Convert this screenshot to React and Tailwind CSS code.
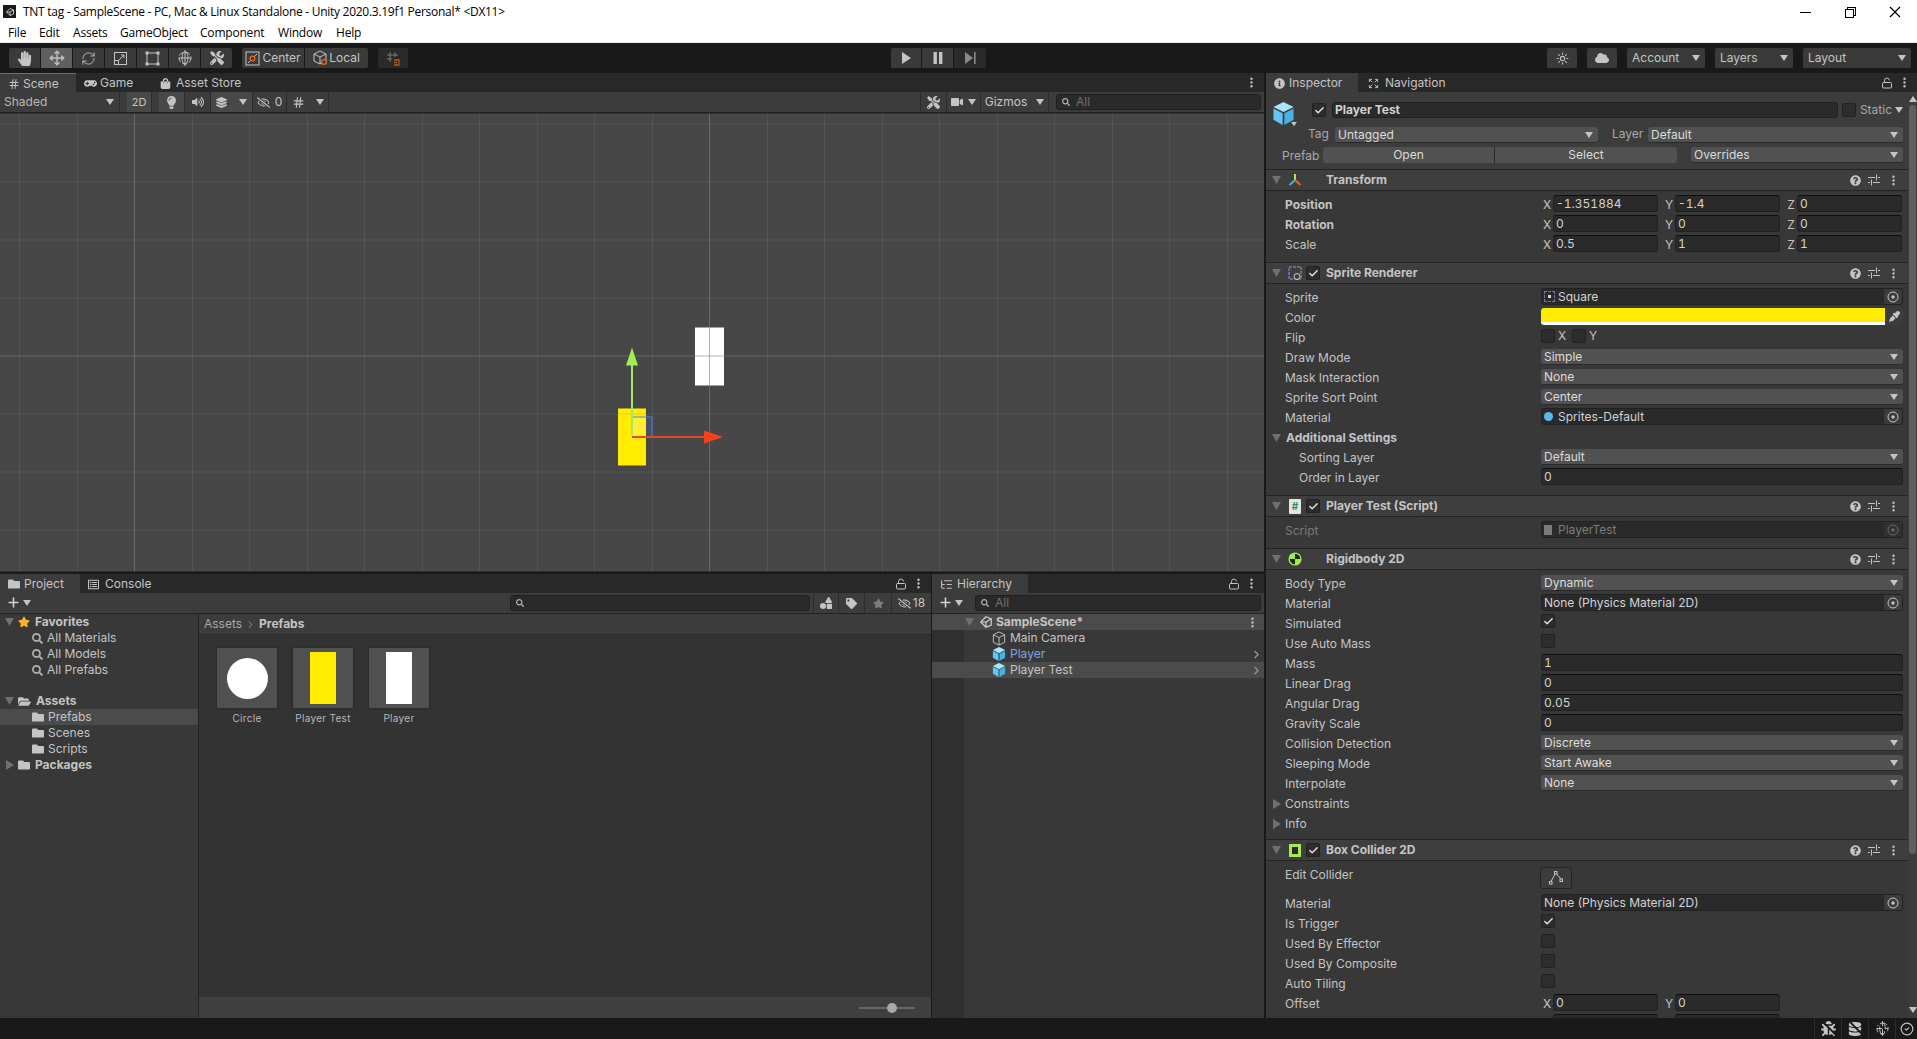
import { Check, ChevronRight, CircleCheck, EllipsisVertical, Expand, Hash, ListTree, LockOpen, Move, Plus, RefreshCw, Sun } from "lucide-react";
import { FaBug, FaCloud, FaDatabase, FaEyeDropper, FaFolder, FaFolderOpen, FaGamepad, FaHandPaper, FaInfoCircle, FaLayerGroup, FaLightbulb, FaQuestionCircle, FaRegEyeSlash, FaRegListAlt, FaSearch, FaShapes, FaShoppingBag, FaStar, FaTag, FaTools, FaVideo, FaVolumeUp } from "react-icons/fa";
import { VscChromeClose, VscChromeMinimize, VscChromeRestore } from "react-icons/vsc";

const menus = [
  ["File", "w-[31px]"],
  ["Edit", "w-[34px]"],
  ["Assets", "w-[47px]"],
  ["GameObject", "w-[80px]"],
  ["Component", "w-[78px]"],
  ["Window", "w-[58px]"],
  ["Help", "w-[30px]"],
];

function Caret({ className = "" }) {
  return (
    <svg width="8" height="6" viewBox="0 0 8 6" className={`shrink-0 ${className}`}>
      <polygon points="0,0 8,0 4,6" fill="#c4c4c4" />
    </svg>
  );
}

function Fold({ open = true }) {
  return (
    <svg width="9" height="10" viewBox="0 0 9 10" className="shrink-0">
      <polygon points={open ? "0,1 9,1 4.5,9" : "1,0 9,5 1,10"} fill="#707070" />
    </svg>
  );
}

function Cube({ size = 14 }) {
  return (
    <svg width={size} height={size} viewBox="0 0 14 16" className="shrink-0">
      <polygon points="7,0 14,3.5 7,7 0,3.5" fill="#a8e4fb" />
      <polygon points="0,4.5 6.4,7.8 6.4,16 0,12.4" fill="#63c5f1" />
      <polygon points="14,4.5 7.6,7.8 7.6,16 14,12.4" fill="#48b2e6" />
    </svg>
  );
}

function WireCube() {
  return (
    <svg width="14" height="15" viewBox="0 0 14 16" className="shrink-0" fill="none" stroke="#c4c4c4" strokeWidth="1">
      <path d="M7 1 13 4V12L7 15 1 12V4ZM1 4 7 7 13 4M7 7V15" />
    </svg>
  );
}

function UnityLogo({ size = 12, color = "#d2d2d2" }) {
  return (
    <svg width={size} height={size} viewBox="0 0 16 16" className="shrink-0" fill="none" stroke={color} strokeWidth="1.6">
      <path d="M8 1 15 4V12L8 15 1 8Z" />
      <path d="M1 8H8L15 4M8 8 8 15" />
    </svg>
  );
}

function ScaleIcon() {
  return (
    <svg width="15" height="15" viewBox="0 0 15 15" fill="none" stroke="#c4c4c4" strokeWidth="1">
      <rect x="1.5" y="1.5" width="12" height="12" />
      <rect x="1.5" y="9.5" width="4" height="4" />
      <path d="M6 9 11 4M8 4H11V7" />
    </svg>
  );
}

function RectIcon() {
  return (
    <svg width="15" height="15" viewBox="0 0 15 15" fill="#c4c4c4" stroke="none">
      <path d="M2 2h11v11H2z" fill="none" stroke="#c4c4c4" />
      <rect x="0.5" y="0.5" width="3" height="3" />
      <rect x="11.5" y="0.5" width="3" height="3" />
      <rect x="0.5" y="11.5" width="3" height="3" />
      <rect x="11.5" y="11.5" width="3" height="3" />
    </svg>
  );
}

function GlobeIcon({ size = 16 }) {
  return (
    <svg width={size} height={size} viewBox="0 0 16 16" fill="none" stroke="#c4c4c4" strokeWidth="1">
      <circle cx="8" cy="8" r="6" strokeDasharray="5 2" />
      <ellipse cx="8" cy="8" rx="3" ry="6" />
      <path d="M2 8H14M8 0V16" />
    </svg>
  );
}

function CenterIcon() {
  return (
    <svg width="15" height="15" viewBox="0 0 15 15" fill="none" className="shrink-0">
      <rect x="1" y="1" width="13" height="13" stroke="#c4c4c4" />
      <path d="M3 12 12 3" stroke="#c4c4c4" />
      <circle cx="7.5" cy="7.5" r="2.4" stroke="#e8662b" strokeWidth="1.3" fill="#3b3b3b" />
    </svg>
  );
}

function LocalIcon() {
  return (
    <svg width="16" height="16" viewBox="0 0 16 16" fill="none" className="shrink-0">
      <path d="M7 1 13 4V11L7 14 1 11V4ZM1 4 7 7 13 4M7 7V14" stroke="#c4c4c4" />
      <circle cx="11" cy="12" r="2.4" stroke="#e8662b" strokeWidth="1.3" fill="#3b3b3b" />
    </svg>
  );
}

function SnapIcon() {
  return (
    <svg width="15" height="15" viewBox="0 0 15 15" fill="none">
      <path d="M4 1V11M9 1V6M1 4H12M1 8H6" stroke="#7d7d7d" />
      <path d="M8 9H13V14H8M8 11.5H11" stroke="#b3542a" strokeWidth="1.3" />
    </svg>
  );
}

function Target() {
  return (
    <svg width="12" height="12" viewBox="0 0 12 12" fill="none">
      <circle cx="6" cy="6" r="5" stroke="#c4c4c4" />
      <circle cx="6" cy="6" r="1.7" fill="#c4c4c4" />
    </svg>
  );
}

function PresetIcon() {
  return (
    <svg width="12" height="12" viewBox="0 0 12 12" fill="none" stroke="#c4c4c4">
      <path d="M0 3.5H7M10 3.5H12M8.5 0.5V6.5M0 8.5H2M5 8.5H12M3.5 5.5V11.5" />
    </svg>
  );
}

function TabBar({ tabs, right }) {
  return (
    <div className="flex h-[19px] shrink-0 items-stretch bg-[#282828]">
      {tabs}
      <div className="ml-auto flex items-center gap-[5px] pr-[6px] text-[#c4c4c4]">
        {right}
      </div>
    </div>
  );
}

function Dots() {
  return <EllipsisVertical size={13} strokeWidth={2.5} className="text-[#c4c4c4]" />;
}

function Tab({ active, blue, width, gap = "gap-[5px]", icon, label }) {
  return (
    <div className={`flex items-center pl-[8px] pt-px ${gap} ${width} ${active ? "bg-[#3c3c3c]" : ""} ${blue ? "border-t border-[#3a79bb]" : ""}`}>
      {icon}
      <span className="text-[#c4c4c4]">{label}</span>
    </div>
  );
}

function ToolBtn({ active, dark, className = "w-[31px]", children }) {
  return (
    <div className={`flex h-5 items-center justify-center ${className} ${active ? "bg-[#5f5f5f]" : dark ? "bg-[#2a2a2a]" : "bg-[#3a3a3a]"} text-[#c4c4c4]`}>
      {children}
    </div>
  );
}

function MainToolbar() {
  return (
    <div className="flex h-[30px] shrink-0 items-start bg-[#191919] pt-[5px]">
      <div className="flex w-[891px] shrink-0 pl-[9px]">
        <div className="flex gap-px overflow-hidden rounded-[2px]">
          <ToolBtn><FaHandPaper size={15} /></ToolBtn>
          <ToolBtn active><Move size={16} /></ToolBtn>
          <ToolBtn><RefreshCw size={15} strokeWidth={1.4} /></ToolBtn>
          <ToolBtn><ScaleIcon /></ToolBtn>
          <ToolBtn><RectIcon /></ToolBtn>
          <ToolBtn><GlobeIcon /></ToolBtn>
          <ToolBtn><FaTools size={14} /></ToolBtn>
        </div>
        <div className="ml-[10px] flex gap-px overflow-hidden rounded-[2px]">
          <ToolBtn className="w-[62px] gap-[2px]"><CenterIcon /><span>Center</span></ToolBtn>
          <ToolBtn className="w-[63px] gap-0"><LocalIcon /><span>Local</span></ToolBtn>
        </div>
        <div className="ml-[10px] overflow-hidden rounded-[2px]">
          <ToolBtn dark className="w-[30px]"><SnapIcon /></ToolBtn>
        </div>
      </div>
      <div className="flex gap-px overflow-hidden rounded-[2px]">
        <ToolBtn className="w-[30px]">
          <svg width="10" height="12" viewBox="0 0 10 12"><polygon points="1,0 10,6 1,12" fill="#c4c4c4" /></svg>
        </ToolBtn>
        <ToolBtn>
          <svg width="10" height="12" viewBox="0 0 10 12" fill="#c4c4c4"><rect x="0.5" width="3.4" height="12" /><rect x="6" width="3.4" height="12" /></svg>
        </ToolBtn>
        <ToolBtn dark className="w-[32px]">
          <svg width="11" height="12" viewBox="0 0 11 12" fill="#888"><polygon points="0,0 8,6 0,12" /><rect x="9" width="1.6" height="12" /></svg>
        </ToolBtn>
      </div>
      <div className="ml-auto flex items-start gap-[10px] pr-[6px]">
        <ToolBtn className="w-[30px] rounded-[2px]"><Sun size={13} /></ToolBtn>
        <ToolBtn className="w-[30px] rounded-[2px]"><FaCloud size={14} /></ToolBtn>
        <TopDrop width="w-[78px]" label="Account" />
        <TopDrop width="w-[78px]" label="Layers" />
        <TopDrop width="w-[108px]" label="Layout" />
      </div>
    </div>
  );
}

function TopDrop({ width, label }) {
  return (
    <div className={`flex h-5 items-center justify-between rounded-[2px] bg-[#3a3a3a] pl-[5px] pr-[5px] text-[#c4c4c4] ${width}`}>
      <span>{label}</span>
      <Caret />
    </div>
  );
}

function SearchBox({ width, placeholder }) {
  return (
    <div className={`flex h-4 items-center gap-[6px] rounded-[3px] border border-[#202020] bg-[#2a2a2a] pl-[5px] text-[#6f6f6f] ${width}`}>
      <FaSearch size={8} className="text-[#b0b0b0]" />
      {placeholder && <span>{placeholder}</span>}
    </div>
  );
}

function StripBtn({ width, children }) {
  return (
    <div className={`flex h-5 items-center justify-center gap-[3px] border-r border-[#2b2b2b] text-[#c4c4c4] ${width}`}>
      {children}
    </div>
  );
}

function SceneToolbar() {
  return (
    <div className="flex h-[21px] shrink-0 items-start border-b border-[#232323] bg-[#3c3c3c] text-[#b8b8b8]">
      <div className="flex h-5 w-[120px] items-center justify-between border-r border-[#2b2b2b] pl-[4px] pr-[5px]">
        <span>Shaded</span>
        <Caret />
      </div>
      <div className="ml-[7px]"><StripBtn width="w-[25px] bg-[#484848] text-[11px]">2D</StripBtn></div>
      <div className="ml-[7px] flex">
        <StripBtn width="w-[26px] bg-[#484848]"><FaLightbulb size={13} /></StripBtn>
        <StripBtn width="w-[26px]"><FaVolumeUp size={12} /></StripBtn>
        <StripBtn width="w-[42px] bg-[#484848]"><FaLayerGroup size={11} /><Caret className="ml-[9px]" /></StripBtn>
        <StripBtn width="w-[34px]"><FaRegEyeSlash size={13} /><span className="ml-[2px]">0</span></StripBtn>
        <StripBtn width="w-[42px]"><Hash size={13} /><Caret className="ml-[8px]" /></StripBtn>
      </div>
      <div className="ml-auto flex items-start pr-[3px]">
        <StripBtn width="w-[27px] border-l"><FaTools size={13} /></StripBtn>
        <StripBtn width="w-[34px]"><FaVideo size={12} /><Caret className="ml-[2px]" /></StripBtn>
        <StripBtn width="w-[68px]"><span>Gizmos</span><Caret className="ml-[6px]" /></StripBtn>
        <div className="ml-[7px] mt-[2px]"><SearchBox width="w-[205px]" placeholder="All" /></div>
      </div>
    </div>
  );
}

function SceneView() {
  const xs = Array.from({ length: 22 }, (_, i) => Math.round(19 + i * 57.5) + 0.5);
  const ys = [124, 182, 240, 298, 356, 414, 472, 530];
  return (
    <svg className="block min-h-0 flex-1" width="1264" height="458" viewBox="0 114 1264 458">
      <rect x="0" y="114" width="1264" height="458" fill="#474747" />
      <rect x="695" y="328" width="29" height="58" fill="#fff" />
      <rect x="632" y="417" width="20" height="20" fill="#3f62c8" fillOpacity="0.3" />
      <rect x="618" y="409" width="28" height="57" fill="#ffec00" />
      <rect x="632" y="417" width="14" height="20" fill="#fff" fillOpacity="0.2" />
      {xs.map((x, i) => (
        <line key={x} x1={x} x2={x} y1="114" y2="572" stroke="#808080" strokeOpacity={i % 10 === 2 ? 0.6 : 0.22} />
      ))}
      {ys.map((y) => (
        <line key={y} x1="0" x2="1264" y1={y + 0.5} y2={y + 0.5} stroke="#808080" strokeOpacity={y === 356 ? 0.6 : 0.22} />
      ))}
      <rect x="632.5" y="417.5" width="19.5" height="19.5" fill="none" stroke="#5b7fc4" />
      <line x1="632" x2="632" y1="437" y2="364" stroke="#a5e868" strokeWidth="2" />
      <polygon points="632,348 638,366 626,366" fill="#9fee52" />
      <line x1="632" x2="706" y1="437.5" y2="437.5" stroke="#e0492a" strokeWidth="2" />
      <polygon points="723,437.5 704,431 704,444" fill="#fb401c" />
    </svg>
  );
}

function ScenePanel() {
  return (
    <div className="flex h-[499px] shrink-0 flex-col overflow-hidden">
      <TabBar
        tabs={
          <>
            <Tab active blue gap="gap-[3px]" width="w-[76px]" icon={<Hash size={12} className="text-[#c4c4c4]" />} label="Scene" />
            <Tab gap="gap-[3px]" width="w-[76px]" icon={<FaGamepad size={13} className="text-[#c4c4c4]" />} label="Game" />
            <Tab width="w-[96px]" icon={<FaShoppingBag size={11} className="text-[#c4c4c4]" />} label="Asset Store" />
          </>
        }
        right={<Dots />}
      />
      <SceneToolbar />
      <SceneView />
    </div>
  );
}

function TreeRow({ indent, fold, icon, label, bold, active }) {
  return (
    <div className={`flex h-4 items-center ${active ? "bg-[#4b4b4b]" : ""}`}>
      <div className={`flex items-center ${indent}`}>
        {fold !== undefined && <Fold open={fold} />}
      </div>
      {icon}
      <span className={`${bold ? "font-bold ml-[5px]" : "ml-[4px]"} text-[#c4c4c4]`}>{label}</span>
    </div>
  );
}

function Thumb({ label, children }) {
  return (
    <div className="flex w-[76px] flex-col items-center">
      <div className="flex h-[60px] w-[60px] items-center justify-center bg-[#505050] shadow-[0_0_2px_#1f1f1f]">
        {children}
      </div>
      <span className="h-5 text-[10px] leading-5 tracking-[0.3px] text-[#b8b8b8]">{label}</span>
    </div>
  );
}

function PlusDrop() {
  return (
    <div className="flex items-center gap-[2px] text-[#d2d2d2]">
      <Plus size={15} strokeWidth={2.5} />
      <Caret />
    </div>
  );
}

function ProjectPanel() {
  return (
    <div className="flex w-[931px] shrink-0 flex-col">
      <TabBar
        tabs={
          <>
            <Tab active gap="gap-[4px]" width="w-[80px]" icon={<FaFolder size={12} className="text-[#c4c4c4]" />} label="Project" />
            <Tab gap="gap-[6px]" width="w-[90px]" icon={<FaRegListAlt size={11} className="text-[#c4c4c4]" />} label="Console" />
          </>
        }
        right={<><LockOpen size={12} /><Dots /></>}
      />
      <div className="flex h-[21px] shrink-0 items-start border-b border-[#232323] bg-[#3c3c3c]">
        <div className="ml-[6px] mt-[2px]"><PlusDrop /></div>
        <div className="ml-auto flex items-start">
          <div className="mt-[2px]"><SearchBox width="w-[300px]" /></div>
          <div className="ml-[3px] flex border-l border-[#2b2b2b]">
            <StripBtn width="w-[25px]"><FaShapes size={12} /></StripBtn>
            <StripBtn width="w-[26px]"><FaTag size={11} /></StripBtn>
            <StripBtn width="w-[27px]"><FaStar size={11} className="text-[#7d7d7d]" /></StripBtn>
            <div className="flex h-5 w-[39px] items-center justify-center gap-[2px] text-[#c4c4c4]"><FaRegEyeSlash size={13} /><span>18</span></div>
          </div>
        </div>
      </div>
      <div className="flex min-h-0 flex-1">
        <div className="w-[199px] shrink-0 border-r border-[#232323] bg-[#383838]">
          <TreeRow indent="w-[18px] pl-[5px]" fold icon={<FaStar size={12} className="text-[#f9b428]" />} label="Favorites" bold />
          <TreeRow indent="w-[32px]" icon={<FaSearch size={11} className="text-[#b0b0b0]" />} label="All Materials" />
          <TreeRow indent="w-[32px]" icon={<FaSearch size={11} className="text-[#b0b0b0]" />} label="All Models" />
          <TreeRow indent="w-[32px]" icon={<FaSearch size={11} className="text-[#b0b0b0]" />} label="All Prefabs" />
          <div className="h-[15px]" />
          <TreeRow indent="w-[18px] pl-[5px]" fold icon={<FaFolderOpen size={13} className="text-[#c4c4c4]" />} label="Assets" bold />
          <TreeRow active indent="w-[32px]" icon={<FaFolder size={12} className="text-[#c4c4c4]" />} label="Prefabs" />
          <TreeRow indent="w-[32px]" icon={<FaFolder size={12} className="text-[#c4c4c4]" />} label="Scenes" />
          <TreeRow indent="w-[32px]" icon={<FaFolder size={12} className="text-[#c4c4c4]" />} label="Scripts" />
          <TreeRow indent="w-[18px] pl-[5px]" fold={false} icon={<FaFolder size={12} className="text-[#c4c4c4]" />} label="Packages" bold />
        </div>
        <div className="flex min-w-0 flex-1 flex-col bg-[#333333]">
          <div className="flex h-[21px] shrink-0 items-center gap-[3px] border-b border-[#2b2b2b] bg-[#3c3c3c] pl-[5px]">
            <span className="text-[#a8a8a8]">Assets</span>
            <ChevronRight size={11} className="text-[#9a9a9a]" />
            <span className="font-bold text-[#c4c4c4]">Prefabs</span>
          </div>
          <div className="flex flex-1 pl-[10px] pt-[13px]">
            <Thumb label="Circle"><div className="h-[41px] w-[41px] rounded-full bg-white" /></Thumb>
            <Thumb label="Player Test"><div className="h-[52px] w-[26px] bg-[#ffec00]" /></Thumb>
            <Thumb label="Player"><div className="h-[52px] w-[26px] bg-white" /></Thumb>
          </div>
          <div className="flex h-[21px] shrink-0 items-center justify-end bg-[#3f3f3f] pr-[16px]">
            <div className="relative h-[2px] w-[56px] bg-[#666666]">
              <div className="absolute left-[28px] top-[-4px] h-[10px] w-[10px] rounded-full bg-[#a8a8a8]" />
            </div>
          </div>
        </div>
      </div>
    </div>
  );
}

function HierRow({ active, color = "text-[#c4c4c4]", icon, label, chevron }) {
  return (
    <div className={`flex h-4 items-center ${active ? "bg-[#4b4b4b]" : ""}`}>
      <div className={`h-full w-8 ${active ? "" : "bg-[#2f2f2f]"}`} />
      <div className="ml-[28px] flex w-[14px] justify-center">{icon}</div>
      <span className={`ml-[4px] ${color}`}>{label}</span>
      {chevron && <ChevronRight size={13} className="ml-auto mr-[1px] text-[#9a9a9a]" />}
    </div>
  );
}

function HierarchyPanel() {
  return (
    <div className="flex min-w-0 flex-1 flex-col">
      <TabBar
        tabs={<Tab active gap="gap-[4px]" width="w-[96px]" icon={<ListTree size={13} className="text-[#c4c4c4]" />} label="Hierarchy" />}
        right={<><LockOpen size={12} /><Dots /></>}
      />
      <div className="flex h-[21px] shrink-0 items-start border-b border-[#232323] bg-[#3c3c3c]">
        <div className="ml-[6px] mt-[2px]"><PlusDrop /></div>
        <div className="ml-auto mr-[3px] mt-[2px]"><SearchBox width="w-[286px]" placeholder="All" /></div>
      </div>
      <div className="flex min-h-0 flex-1 flex-col bg-[#383838]">
        <div className="flex h-4 shrink-0 items-center bg-[#4b4b4b]">
          <div className="ml-[33px]"><Fold /></div>
          <div className="ml-[6px]"><UnityLogo /></div>
          <span className="ml-[4px] font-bold text-[#c4c4c4]">SampleScene*</span>
          <div className="ml-auto mr-[5px]"><Dots /></div>
        </div>
        <HierRow icon={<WireCube />} label="Main Camera" />
        <HierRow icon={<Cube />} label="Player" color="text-[#7ba4e6]" chevron />
        <HierRow active icon={<Cube />} label="Player Test" chevron />
        <div className="flex flex-1"><div className="w-8 bg-[#2f2f2f]" /></div>
      </div>
    </div>
  );
}

function Row({ label, bold, dim, indent = "pl-[19px]", children }) {
  const w = indent === "pl-[19px]" ? "w-[256px]" : "w-[242px]";
  return (
    <div className={`flex h-5 shrink-0 items-start pr-[5px] ${indent}`}>
      <span className={`h-5 shrink-0 leading-5 ${w} ${bold ? "font-bold" : ""} ${dim ? "text-[#7a7a7a]" : "text-[#c4c4c4]"}`}>{label}</span>
      {children}
    </div>
  );
}

function Drop({ value, className = "flex-1" }) {
  return (
    <div className={`mt-px flex h-[16px] items-center justify-between rounded-[3px] border-b border-[#2a2a2a] bg-[#515151] pl-[3px] pr-[5px] text-[#dcdcdc] ${className}`}>
      <span>{value}</span>
      <Caret />
    </div>
  );
}

function Field({ value, className = "flex-1" }) {
  return (
    <div className={`flex h-[17px] items-center rounded-[3px] border border-[#212121] border-t-[#0f0f0f] bg-[#2a2a2a] pl-[2px] tabular-nums text-[#d2d2d2] ${className}`}>
      {value}
    </div>
  );
}

function Obj({ icon, value, dim }) {
  return (
    <div className={`flex h-[17px] flex-1 items-center overflow-hidden rounded-[3px] border border-[#212121] bg-[#2a2a2a] pl-[2px] ${dim ? "text-[#7a7a7a]" : "text-[#d2d2d2]"}`}>
      {icon && <div className="mr-px flex w-[13px] justify-start">{icon}</div>}
      <span>{value}</span>
      <div className={`ml-auto flex h-full w-[18px] items-center justify-center bg-[#3c3c3c] ${dim ? "opacity-40" : ""}`}><Target /></div>
    </div>
  );
}

function Box({ on, className = "" }) {
  return (
    <div className={`flex h-[14px] w-[14px] shrink-0 items-center justify-center rounded-[2px] border border-[#212121] bg-[#2d2d2d] ${className}`}>
      {on && <Check size={11} strokeWidth={3} className="text-[#e4e4e4]" />}
    </div>
  );
}

function Vec({ items }) {
  return (
    <div className="flex gap-[5px]">
      {items.map(([axis, v]) => (
        <div key={axis} className="flex items-start">
          <span className="h-5 w-[12px] text-center leading-5 text-[#c4c4c4]">{axis}</span>
          <Field value={v} className="w-[105px] flex-none" />
        </div>
      ))}
    </div>
  );
}

function CompHeader({ icon, check, title }) {
  return (
    <div className="flex h-[22px] items-center border-b border-t border-[#232323] bg-[#3e3e3e] pl-[6px] pr-[8px]">
      <Fold />
      <div className="ml-[7px] flex w-[14px] justify-center">{icon}</div>
      <div className="ml-[4px] w-[19px]">{check && <Box on />}</div>
      <span className="ml-[1px] font-bold text-[#c4c4c4]">{title}</span>
      <div className="ml-auto flex items-center gap-[7px] text-[#c4c4c4]">
        <FaQuestionCircle size={11} />
        <PresetIcon />
        <Dots />
      </div>
    </div>
  );
}

function Comp({ icon, check, title, pb, children }) {
  return (
    <div>
      <CompHeader icon={icon} check={check} title={title} />
      <div className={`pt-[4px] ${pb}`}>{children}</div>
    </div>
  );
}

function TransformIcon() {
  return (
    <svg width="14" height="14" viewBox="0 0 14 14" fill="none" strokeWidth="2">
      <path d="M7 7V1" stroke="#a5e868" />
      <path d="M7 7 1.5 12" stroke="#4ca9e6" />
      <path d="M7 7 12.5 12" stroke="#e8622b" />
    </svg>
  );
}

function SpriteIcon() {
  return (
    <svg width="14" height="15" viewBox="0 0 14 15" fill="none">
      <rect x="1" y="1" width="12" height="12" stroke="#a48ae8" strokeDasharray="3 1" />
      <circle cx="9" cy="10.5" r="3" stroke="#d2d2d2" fill="#3e3e3e" />
    </svg>
  );
}

function Slashed({ children }) {
  return (
    <div className="relative flex h-full w-[27px] items-center justify-center border-l border-[#2b2b2b]">
      {children}
      <div className="absolute left-[6px] top-[10px] h-[2px] w-[18px] rotate-45 bg-[#191919]" />
    </div>
  );
}

function Inspector() {
  return (
    <div className="flex min-w-0 flex-1 flex-col bg-[#383838]">
      <TabBar
        tabs={
          <>
            <Tab active gap="gap-[4px]" width="w-[92px]" icon={<FaInfoCircle size={11} className="text-[#c4c4c4]" />} label="Inspector" />
            <div className="ml-[2px] flex">
              <Tab gap="gap-[6px]" width="w-[96px]" icon={<Expand size={11} className="text-[#c4c4c4]" />} label="Navigation" />
            </div>
          </>
        }
        right={<><LockOpen size={12} /><Dots /></>}
      />
      <div className="flex min-h-0 flex-1 overflow-hidden">
        <div className="w-[642px] shrink-0">
          <div className="h-[77px] bg-[#3c3c3c] pt-[10px]">
            <div className="flex h-4 items-center pl-[6px] pr-[5px]">
              <div className="relative mt-[6px] flex w-[24px] shrink-0">
                <Cube size={23} />
                <Caret className="absolute -right-[2px] bottom-[-2px] scale-75" />
              </div>
              <Box on className="ml-[16px]" />
              <div className="ml-[6px] flex h-4 flex-1 items-center rounded-[3px] border border-[#212121] bg-[#2a2a2a] pl-[2px] font-bold text-[#d2d2d2]">Player Test</div>
              <Box className="ml-[4px]" />
              <span className="ml-[4px] text-[#a8a8a8]">Static</span>
              <Caret className="ml-[3px]" />
            </div>
            <div className="mt-[8px] flex h-[17px] items-start pl-[42px] pr-[5px]">
              <span className="w-[27px] leading-[16px] text-[#a8a8a8]">Tag</span>
              <Drop value="Untagged" className="w-[263px] flex-none" />
              <span className="ml-[14px] w-[36px] leading-[16px] text-[#a8a8a8]">Layer</span>
              <Drop value="Default" />
            </div>
            <div className="mt-[4px] flex h-4 items-start pl-[16px] pr-[5px]">
              <span className="w-[41px] leading-[18px] text-[#a8a8a8]">Prefab</span>
              <div className="flex h-4 w-[354px] overflow-hidden rounded-[3px] bg-[#515151] text-[#dcdcdc]">
                <div className="flex w-[172px] items-center justify-center border-r border-[#2a2a2a]">Open</div>
                <div className="flex flex-1 items-center justify-center">Select</div>
              </div>
              <div className="ml-[14px] -mt-px flex-1"><Drop value="Overrides" className="w-full" /></div>
            </div>
          </div>

          <Comp icon={<TransformIcon />} title="Transform" pb="pb-[7px]">
            <Row label="Position" bold><Vec items={[["X", "-1.351884"], ["Y", "-1.4"], ["Z", "0"]]} /></Row>
            <Row label="Rotation" bold><Vec items={[["X", "0"], ["Y", "0"], ["Z", "0"]]} /></Row>
            <Row label="Scale"><Vec items={[["X", "0.5"], ["Y", "1"], ["Z", "1"]]} /></Row>
          </Comp>

          <Comp icon={<SpriteIcon />} check title="Sprite Renderer" pb="pb-[7px]">
            <Row label="Sprite"><Obj icon={<div className="flex h-[11px] w-[11px] items-center justify-center border border-dashed border-[#7e6bb8]"><div className="h-[3px] w-[3px] bg-[#d2d2d2]" /></div>} value="Square" /></Row>
            <Row label="Color">
              <div className="flex h-[17px] flex-1 items-stretch overflow-hidden rounded-[3px] bg-[#2a2a2a]">
                <div className="flex flex-1 flex-col"><div className="flex-1 bg-[#ffec00]" /><div className="h-[3px] bg-white" /></div>
                <div className="flex w-[18px] items-center justify-center bg-[#3c3c3c] text-[#c4c4c4]"><FaEyeDropper size={11} /></div>
              </div>
            </Row>
            <Row label="Flip">
              <div className="flex items-center gap-[3px] text-[#c4c4c4]">
                <Box />
                <span className="w-[11px] leading-[16px]">X</span>
                <Box />
                <span className="leading-[16px]">Y</span>
              </div>
            </Row>
            <Row label="Draw Mode"><Drop value="Simple" /></Row>
            <Row label="Mask Interaction"><Drop value="None" /></Row>
            <Row label="Sprite Sort Point"><Drop value="Center" /></Row>
            <Row label="Material"><Obj icon={<div className="h-[9px] w-[9px] rounded-full bg-[#5cb8ea]" />} value="Sprites-Default" /></Row>
            <div className="flex h-5 items-center gap-[5px] pl-[6px] font-bold text-[#c4c4c4]"><Fold /><span>Additional Settings</span></div>
            <Row label="Sorting Layer" indent="pl-[33px]"><Drop value="Default" /></Row>
            <Row label="Order in Layer" indent="pl-[33px]"><Field value="0" /></Row>
          </Comp>

          <Comp
            icon={<div className="flex h-[15px] w-[12px] items-center justify-center rounded-[1px] bg-[#e4e4e4] text-[10px] font-bold text-[#2f8f4f]">#</div>}
            check
            title="Player Test (Script)"
            pb="pb-[7px]"
          >
            <Row label="Script" dim><Obj dim icon={<div className="h-[10px] w-[8px] bg-[#7a7a7a]" />} value="PlayerTest" /></Row>
          </Comp>

          <Comp
            icon={
              <svg width="16" height="16" viewBox="0 0 16 16">
                <circle cx="8" cy="8" r="7.5" fill="#a5e84f" />
                <path d="M8 2A6 6 0 0 1 14 8H8ZM8 14A6 6 0 0 1 2 8H8Z" fill="#1f2a14" />
              </svg>
            }
            title="Rigidbody 2D"
            pb="pb-[5px]"
          >
            <Row label="Body Type"><Drop value="Dynamic" /></Row>
            <Row label="Material"><Obj value="None (Physics Material 2D)" /></Row>
            <Row label="Simulated"><Box on /></Row>
            <Row label="Use Auto Mass"><Box /></Row>
            <Row label="Mass"><Field value="1" /></Row>
            <Row label="Linear Drag"><Field value="0" /></Row>
            <Row label="Angular Drag"><Field value="0.05" /></Row>
            <Row label="Gravity Scale"><Field value="0" /></Row>
            <Row label="Collision Detection"><Drop value="Discrete" /></Row>
            <Row label="Sleeping Mode"><Drop value="Start Awake" /></Row>
            <Row label="Interpolate"><Drop value="None" /></Row>
            <div className="flex h-5 items-center gap-[4px] pl-[6px] text-[#c4c4c4]"><Fold open={false} /><span>Constraints</span></div>
            <div className="flex h-5 items-center gap-[4px] pl-[6px] text-[#c4c4c4]"><Fold open={false} /><span>Info</span></div>
          </Comp>

          <Comp
            icon={<div className="h-[13px] w-[12px] border-[3px] border-[#a5e84f] bg-[#2a2a2a]" />}
            check
            title="Box Collider 2D"
            pb="pb-0"
          >
            <div className="flex h-[29px] items-start pl-[19px]">
              <span className="h-5 w-[255px] leading-5 text-[#c4c4c4]">Edit Collider</span>
              <div className="mt-[2px] flex h-[22px] w-[32px] items-center justify-center rounded-[3px] border border-[#232323] bg-[#3c3c3c]">
                <svg width="14" height="14" viewBox="0 0 14 14" fill="none" stroke="#c4c4c4"><rect x="0.5" y="10.5" width="2.5" height="2.5" /><rect x="5.5" y="0.5" width="2.5" height="2.5" /><rect x="11" y="8" width="2.5" height="2.5" /><path d="M2 10.5 6 3M7.5 3 12 8" /></svg>
              </div>
            </div>
            <Row label="Material"><Obj value="None (Physics Material 2D)" /></Row>
            <Row label="Is Trigger"><Box on /></Row>
            <Row label="Used By Effector"><Box /></Row>
            <Row label="Used By Composite"><Box /></Row>
            <Row label="Auto Tiling"><Box /></Row>
            <Row label="Offset"><Vec items={[["X", "0"], ["Y", "0"]]} /></Row>
            <Row label=""><Vec items={[["", ""], [" ", ""]]} /></Row>
          </Comp>
        </div>
        <div className="flex flex-1 flex-col items-center bg-[#3c3c3c] pt-[4px]">
          <Caret className="rotate-180" />
          <div className="mt-[3px] h-[749px] w-[7px] rounded-[3px] bg-[#5f5f5f]" />
          <Caret className="mt-auto mb-[5px]" />
        </div>
      </div>
    </div>
  );
}

function StatusBar() {
  return (
    <div className="flex h-[21px] shrink-0 items-center justify-end bg-[#191919] text-[#c4c4c4]">
      <Slashed><FaBug size={15} /></Slashed>
      <Slashed><FaDatabase size={14} /></Slashed>
      <Slashed><GlobeIcon size={15} /></Slashed>
      <div className="flex h-full w-[22px] items-center justify-center border-l border-[#2b2b2b]"><CircleCheck size={14} /></div>
    </div>
  );
}

export default function App() {
  return (
    <div className="flex h-[1039px] w-[1917px] flex-col overflow-hidden bg-[#191919] font-['Inter',sans-serif] text-[12px]">
      <div className="flex h-[23px] shrink-0 items-center bg-white pl-[3px] font-['Open_Sans',sans-serif] text-[12px] text-black">
        <div className="flex h-[13px] w-[13px] items-center justify-center bg-[#1a1a1a]"><UnityLogo size={8} color="#e4e4e4" /></div>
        <span className="ml-[7px] tracking-[-0.28px]">TNT tag - SampleScene - PC, Mac &amp; Linux Standalone - Unity 2020.3.19f1 Personal* &lt;DX11&gt;</span>
        <div className="ml-auto flex items-center gap-[29px] pr-[14px]">
          <VscChromeMinimize size={16} />
          <VscChromeRestore size={16} />
          <VscChromeClose size={16} />
        </div>
      </div>
      <div className="flex h-5 shrink-0 items-start border-b border-[#f0f0f0] bg-white pl-[8px] font-['Open_Sans',sans-serif] text-[12px] text-black">
        {menus.map(([m, w]) => (
          <span key={m} className={`leading-[19px] tracking-[-0.2px] ${w}`}>{m}</span>
        ))}
      </div>
      <MainToolbar />
      <div className="flex min-h-0 flex-1 gap-[2px]">
        <div className="flex w-[1264px] shrink-0 flex-col gap-[2px]">
          <ScenePanel />
          <div className="flex min-h-0 flex-1 gap-px">
            <ProjectPanel />
            <HierarchyPanel />
          </div>
        </div>
        <Inspector />
      </div>
      <StatusBar />
    </div>
  );
}
